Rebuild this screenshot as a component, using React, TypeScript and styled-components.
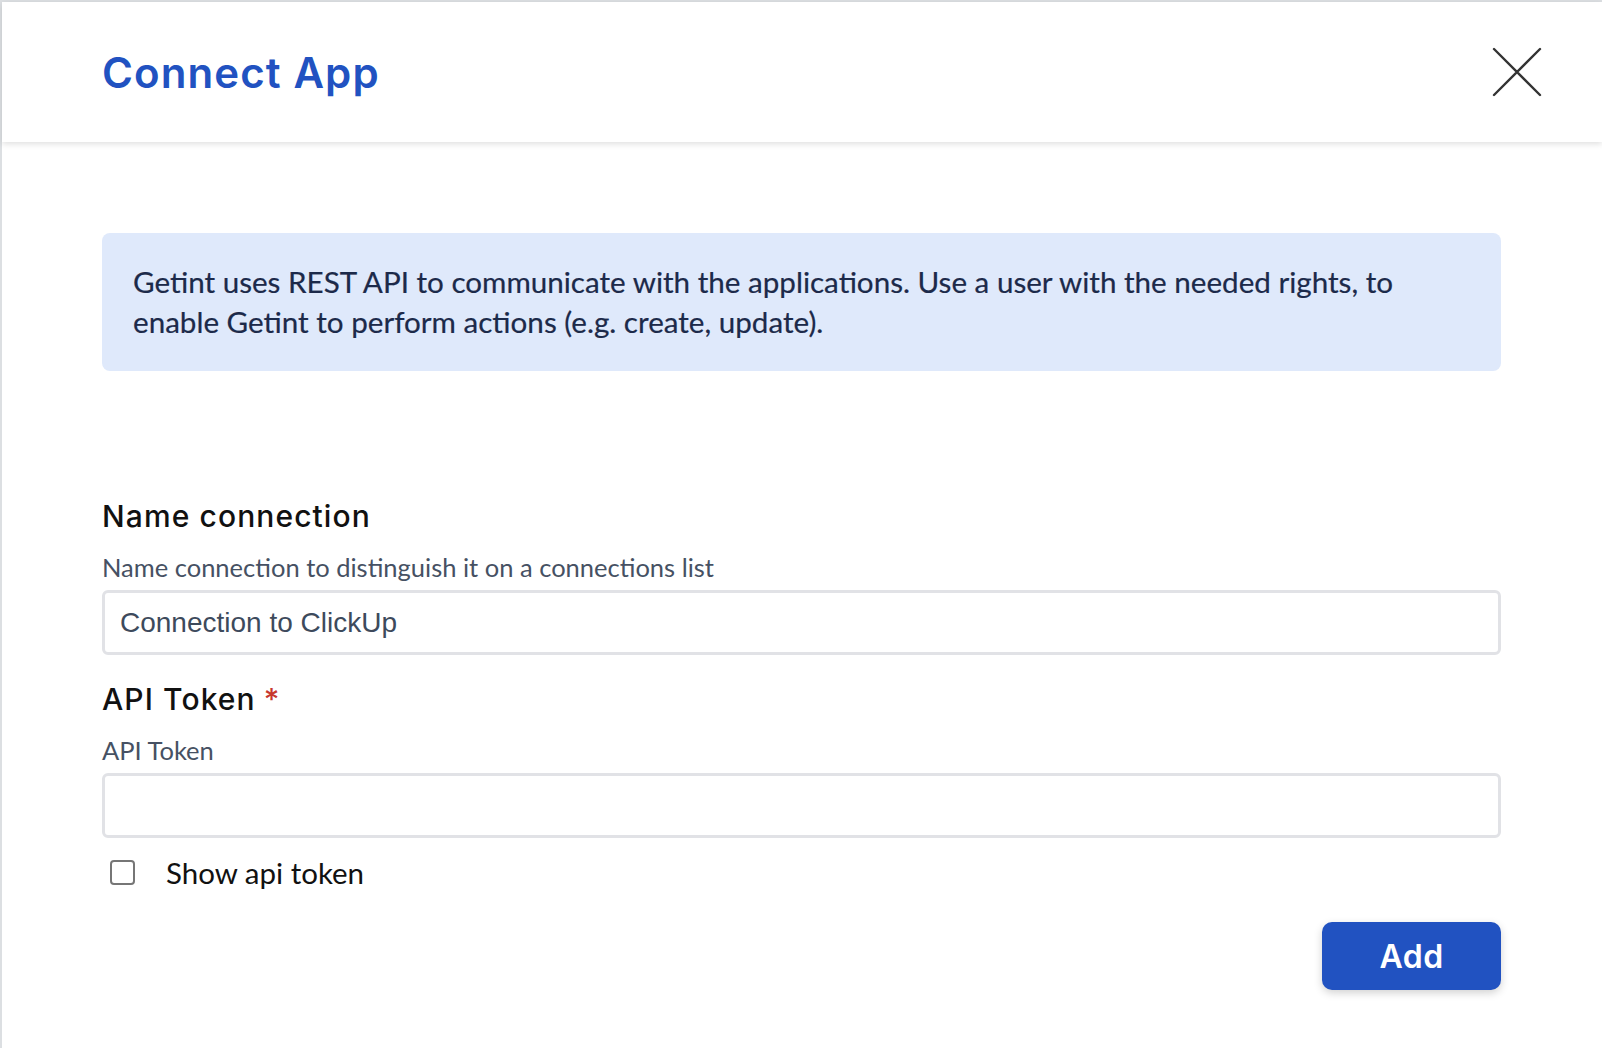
import React, { useState } from 'react';
import styled, { createGlobalStyle } from 'styled-components';

const GlobalStyle = createGlobalStyle`
    html, body {
        margin: 0;
        padding: 0;
        background: #dcdfe2;
    }
    * {
        box-sizing: border-box;
    }
`;

const Page = styled.div`
    padding: 2px 0 0 2px;
    min-height: 100vh;
    background: #dcdfe2;
`;

const Modal = styled.div`
    background: #ffffff;
    min-height: 1046px;
    display: flex;
    flex-direction: column;
`;

const Header = styled.header`
    height: 140px;
    display: flex;
    align-items: center;
    justify-content: space-between;
    padding: 0 60px 0 100px;
    background: #ffffff;
    box-shadow: 0 2px 6px rgba(0, 0, 0, 0.13);
    position: relative;
    z-index: 1;
`;

const Title = styled.h1`
    margin: 0;
    font-family: Inter, "Noto Sans", sans-serif;
    font-weight: 600;
    font-size: 42px;
    letter-spacing: 1.1px;
    color: #2152c1;
`;

const CloseButton = styled.button`
    width: 50px;
    height: 50px;
    padding: 0;
    border: none;
    background: transparent;
    cursor: pointer;
    display: flex;
    align-items: center;
    justify-content: center;
`;

const Body = styled.div`
    padding: 91px 101px 40px 100px;
    display: flex;
    flex-direction: column;
`;

const InfoBox = styled.div`
    background: #dfe9fb;
    border-radius: 8px;
    padding: 29px 60px 29px 31px;
    font-family: Lato, "Noto Sans", sans-serif;
    font-size: 29.6px;
    line-height: 40px;
    color: #1c2a4a;
    -webkit-text-stroke: 0.2px #1c2a4a;
`;

const Heading = styled.h2<{ $first?: boolean }>`
    margin: ${(p) => (p.$first ? '127px' : '26px')} 0 0;
    font-family: Inter, "Noto Sans", sans-serif;
    font-weight: 500;
    font-size: 30px;
    line-height: 36px;
    letter-spacing: 1.1px;
    color: #111111;
`;

const Required = styled.span`
    color: #c8372d;
    margin-left: 8px;
`;

const Hint = styled.div`
    margin-top: 18px;
    font-family: Lato, "Noto Sans", sans-serif;
    font-size: 25.5px;
    line-height: 30px;
    color: #465163;
`;

const TextInput = styled.input`
    margin-top: 8px;
    width: 100%;
    height: 65px;
    border: 3px solid #e1e2e6;
    border-radius: 6px;
    padding: 0 15px;
    font-family: "Liberation Sans", Arial, sans-serif;
    font-size: 28px;
    color: #3d4a5c;
    outline: none;
    background: #ffffff;
`;

const CheckRow = styled.label`
    margin-top: 17px;
    height: 34px;
    display: flex;
    align-items: center;
    gap: 31px;
    padding-left: 8px;
    font-family: Lato, "Noto Sans", sans-serif;
    font-size: 29.5px;
    color: #111111;
    cursor: pointer;
`;

const Box = styled.span<{ $checked: boolean }>`
    width: 25px;
    height: 25px;
    border: 2px solid #767676;
    border-radius: 4px;
    background: ${(p) => (p.$checked ? '#2152c1' : '#ffffff')};
    flex-shrink: 0;
`;

const Footer = styled.div`
    margin-top: 33px;
    display: flex;
    justify-content: flex-end;
`;

const AddButton = styled.button`
    width: 179px;
    height: 68px;
    border: none;
    border-radius: 10px;
    background: #2152c1;
    color: #ffffff;
    font-family: Inter, "Noto Sans", sans-serif;
    font-weight: 600;
    font-size: 32px;
    letter-spacing: 0.5px;
    box-shadow: 0 3px 8px rgba(0, 0, 0, 0.18);
    cursor: pointer;
`;

export default function App() {
    const [name, setName] = useState('Connection to ClickUp');
    const [token, setToken] = useState('');
    const [showToken, setShowToken] = useState(false);

    return (
        <Page>
            <GlobalStyle />
            <Modal>
                <Header>
                    <Title>Connect App</Title>
                    <CloseButton aria-label="Close">
                        <svg width="50" height="50" viewBox="0 0 50 50">
                            <path d="M2 2 L48 48 M48 2 L2 48" stroke="#333" strokeWidth="2.4" strokeLinecap="round" />
                        </svg>
                    </CloseButton>
                </Header>

                <Body>
                    <InfoBox>
                        Getint uses REST API to communicate with the applications. Use a user with the needed rights, to
                        enable Getint to perform actions (e.g. create, update).
                    </InfoBox>

                    <Heading $first>Name connection</Heading>
                    <Hint>Name connection to distinguish it on a connections list</Hint>
                    <TextInput value={name} onChange={(e) => setName(e.target.value)} />

                    <Heading>
                        API Token<Required>*</Required>
                    </Heading>
                    <Hint>API Token</Hint>
                    <TextInput
                        type={showToken ? 'text' : 'password'}
                        value={token}
                        onChange={(e) => setToken(e.target.value)}
                    />

                    <CheckRow onClick={() => setShowToken(!showToken)}>
                        <Box $checked={showToken} />
                        Show api token
                    </CheckRow>

                    <Footer>
                        <AddButton>Add</AddButton>
                    </Footer>
                </Body>
            </Modal>
        </Page>
    );
}
